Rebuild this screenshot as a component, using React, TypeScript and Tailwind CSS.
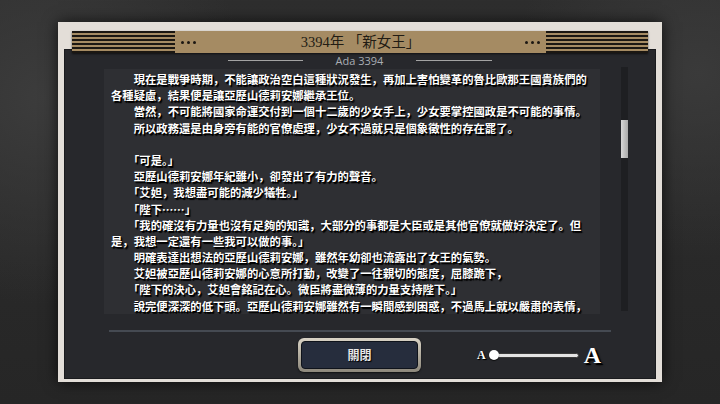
import React from 'react';

const cjk = "font-['Noto_Sans_CJK_JP','Noto_Sans_CJK_TC',sans-serif]";

const lines: { t: string; indent: boolean }[] = [
  { t: '現在是戰爭時期，不能讓政治空白這種狀況發生，再加上害怕變革的魯比歐那王國貴族們的', indent: true },
  { t: '各種疑慮，結果便是讓亞歷山德莉安娜繼承王位。', indent: false },
  { t: '當然，不可能將國家命運交付到一個十二歲的少女手上，少女要掌控國政是不可能的事情。', indent: true },
  { t: '所以政務還是由身旁有能的官僚處理，少女不過就只是個象徵性的存在罷了。', indent: true },
  { t: '', indent: false },
  { t: '「可是。」', indent: true },
  { t: '亞歷山德莉安娜年紀雖小，卻發出了有力的聲音。', indent: true },
  { t: '「艾妲，我想盡可能的減少犧牲。」', indent: true },
  { t: '「陛下……」', indent: true },
  { t: '「我的確沒有力量也沒有足夠的知識，大部分的事都是大臣或是其他官僚就做好決定了。但', indent: true },
  { t: '是，我想一定還有一些我可以做的事。」', indent: false },
  { t: '明確表達出想法的亞歷山德莉安娜，雖然年幼卻也流露出了女王的氣勢。', indent: true },
  { t: '艾妲被亞歷山德莉安娜的心意所打動，改變了一往親切的態度，屈膝跪下，', indent: true },
  { t: '「陛下的決心，艾妲會銘記在心。微臣將盡微薄的力量支持陛下。」', indent: true },
  { t: '說完便深深的低下頭。亞歷山德莉安娜雖然有一瞬間感到困惑，不過馬上就以嚴肅的表情，', indent: true },
];

function Stripes({ className }: { className?: string }) {
  return (
    <div className={`flex flex-col gap-[2px] ${className ?? ''}`}>
      {[0, 1, 2, 3, 4, 5].map((i) => (
        <div key={i} className="h-[2px] bg-[#1b1712]" />
      ))}
    </div>
  );
}

function Dots() {
  return (
    <div className="flex gap-[3px]">
      <div className="w-[3px] h-[3px] rounded-full bg-[#1b1712]" />
      <div className="w-[3px] h-[3px] rounded-full bg-[#1b1712]" />
      <div className="w-[3px] h-[3px] rounded-full bg-[#1b1712]" />
    </div>
  );
}

function Line({ t, indent }: { t: string; indent: boolean }) {
  if (!t) return <div className="h-[16.2px]" />;
  const lead = t.startsWith('「');
  return (
    <div className={`h-[16.2px] whitespace-nowrap ${indent ? 'pl-[2em]' : ''}`}>
      {lead ? (
        <>
          <span className="[font-feature-settings:'halt']">「</span>
          {t.slice(1)}
        </>
      ) : (
        t
      )}
    </div>
  );
}

export default function App() {
  return (
    <div className="w-[720px] h-[404px] overflow-hidden flex flex-col items-center pt-[22px] bg-[#2a2a2a] bg-[radial-gradient(circle_at_6%_24%,#3c3c3c_0%,transparent_28%),radial-gradient(circle_at_97%_18%,#3a3a3a_0%,transparent_24%),linear-gradient(180deg,#2e2e2e,#262626)]">
      {/* Frame */}
      <div className="w-[604px] h-[360px] flex flex-col px-[6px] pt-[9px] pb-[4px] bg-[#e3ded8] shadow-[0_0_14px_rgba(0,0,0,0.7)]">
        {/* Header bar */}
        <div className="relative z-10 mx-[8px] -mb-[4px] h-[26px] flex items-center bg-[#a58b63] shadow-[0_1px_2px_rgba(0,0,0,0.6)]">
          <Stripes className="w-[103px]" />
          <div className="ml-[6px]">
            <Dots />
          </div>
          <div className="flex-1 text-center text-[14.5px] leading-none text-[#221c14] font-['Liberation_Serif','Noto_Sans_CJK_JP',serif]">
            3394年 「新女王」
          </div>
          <div className="mr-[6px]">
            <Dots />
          </div>
          <Stripes className="w-[102px]" />
        </div>

        {/* Dark panel */}
        <div className="flex-1 flex flex-col pt-[4px] pb-[6px] bg-[#27282c] border border-[#1a1b1e]">
          {/* Subtitle */}
          <div className="h-[13px] flex items-center justify-center gap-[33px]">
            <div className="w-[75px] h-px bg-[#a3a3a3]" />
            <span className="text-[11px] leading-none text-[#a9adb3] font-['Open_Sans',sans-serif]">Ada 3394</span>
            <div className="w-[76px] h-px bg-[#a3a3a3]" />
          </div>

          {/* Text + scrollbar */}
          <div className="flex items-start pl-[39px]">
            <div
              className={`mt-[2px] w-[496px] h-[245px] overflow-hidden pl-[7px] pt-[2px] bg-[#2e2f33] text-white font-bold text-[11.33px] leading-[16.2px] [text-shadow:1px_1px_0_#000,1.5px_1.5px_1px_#000] ${cjk}`}
            >
              {lines.map((l, i) => (
                <Line key={i} t={l.t} indent={l.indent} />
              ))}
            </div>
            <div className="ml-[21px] w-[7px] h-[244px] bg-[#1e1f22] pt-[53px]">
              <div className="h-[38px] bg-gradient-to-r from-[#d8d8d8] to-[#a9a9a9]" />
            </div>
          </div>

          {/* Separator */}
          <div className="mt-[16px] ml-[44px] w-[502px] h-[2px] bg-[#454a52]" />

          {/* Bottom row */}
          <div className="mt-[6px] flex items-center pl-[233px]">
            <div className="w-[123px] h-[34px] p-[3px] rounded-[6px] bg-gradient-to-b from-[#d9d3c6] via-[#b3ad9f] to-[#8d887c] shadow-[0_1px_2px_rgba(0,0,0,0.6)]">
              <div
                className={`h-full rounded-[4px] bg-[#262d3d] border border-[#0f131b] flex items-center justify-center text-[12px] font-bold text-[#e8e8e8] [text-shadow:1px_1px_1px_#000] ${cjk}`}
              >
                關閉
              </div>
            </div>

            {/* Font size slider */}
            <div className="ml-[56px] flex items-center">
              <span className="text-[12px] leading-none font-bold text-white font-['Liberation_Serif',serif] [text-shadow:1px_1px_0_#000,1px_1px_1px_#000]">
                A
              </span>
              <div className="relative ml-[3px] w-[90px] h-[12px] flex items-center">
                <div className="ml-[5px] w-[85px] h-[5px] rounded-full bg-[#e4e4e4] border border-[#3a3a3a]" />
                <div className="absolute left-0 top-px w-[10px] h-[10px] rounded-full bg-white shadow-[0_1px_1px_rgba(0,0,0,0.7)]" />
              </div>
              <span className="ml-[5px] text-[24px] leading-none font-bold text-white font-['Liberation_Serif',serif] [text-shadow:2px_2px_0_#000,2px_2px_2px_#000]">
                A
              </span>
            </div>
          </div>
        </div>
      </div>
    </div>
  );
}
